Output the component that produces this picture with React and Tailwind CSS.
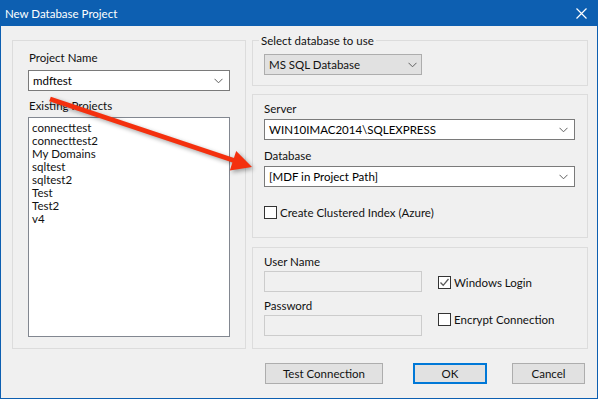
import { useState } from "react";

const font = { fontFamily: "Lato, 'Noto Sans', sans-serif" };

function Chevron() {
  return (
    <svg width="9" height="6" viewBox="0 0 9 6" className="shrink-0">
      <path d="M0.5 0.8 L4.5 4.8 L8.5 0.8" fill="none" stroke="#606060" strokeWidth="1" />
    </svg>
  );
}

function Combo({ value, className = "" }) {
  return (
    <div className={"flex items-center justify-between h-[21px] bg-white border border-[#7a7a7a] pl-[4px] pr-[6px] " + className}>
      <span className="text-black">{value}</span>
      <Chevron />
    </div>
  );
}

function CheckBox({ checked, label }) {
  return (
    <div className="flex items-center gap-[3px]">
      <div className="w-[13px] h-[13px] border border-[#333333] bg-white flex items-center justify-center">
        {checked && (
          <svg width="11" height="11" viewBox="0 0 11 11">
            <path d="M1.5 5.5 L4.2 8.3 L9.5 2" fill="none" stroke="#5a5a5a" strokeWidth="1.3" />
          </svg>
        )}
      </div>
      <span>{label}</span>
    </div>
  );
}

export default function App() {
  const [projects] = useState(["connecttest", "connecttest2", "My Domains", "sqltest", "sqltest2", "Test", "Test2", "v4"]);

  return (
    <div style={font} className="relative w-[598px] h-[399px] bg-[#0d5fb1] px-px pb-px flex flex-col text-[11.5px] leading-[15px] text-[#111111]">
      <div className="h-[26px] shrink-0 flex items-center justify-between pl-[4px] pr-[10px] text-white text-[11.5px]">
        <span>New Database Project</span>
        <svg width="11" height="11" viewBox="0 0 11 11">
          <path d="M0.5 0.5 L10.5 10.5 M10.5 0.5 L0.5 10.5" stroke="white" strokeWidth="1.2" />
        </svg>
      </div>

      <div className="flex-1 bg-[#f0f0f0] flex flex-col pl-[11px]">
        <div className="flex gap-[6px] pt-[14px]">
          <div className="w-[234px] h-[309px] border border-[#dcdcdc] px-[15px] pt-[9px] flex flex-col">
            <span className="pl-px">Project Name</span>
            <Combo value="mdftest" className="mt-[5px]" />
            <span className="mt-[7px] pl-px">Existing Projects</span>
            <div className="mt-[4px] h-[220px] bg-white border border-[#828790] pl-[3px] pt-[3px] flex flex-col">
              {projects.map((p) => (
                <span key={p} className="h-[13px] leading-[13px]">{p}</span>
              ))}
            </div>
          </div>

          <div className="w-[336px] flex flex-col">
            <div className="relative h-[46px] border border-[#dcdcdc] pl-[11px] pt-[13px]">
              <span className="absolute -top-[8px] left-[6px] bg-[#f0f0f0] px-[2px]">Select database to use</span>
              <div className="w-[158px] h-[21px] flex items-center justify-between bg-[#e1e1e1] border border-[#adadad] pl-[4px] pr-[4px]">
                <span>MS SQL Database</span>
                <Chevron />
              </div>
            </div>

            <div className="h-[144px] mt-[8px] border border-[#dcdcdc] pl-[11px] pr-[12px] pt-[6px] flex flex-col">
              <span>Server</span>
              <Combo value="WIN10IMAC2014\SQLEXPRESS" className="mt-[3px]" />
              <span className="mt-[8px]">Database</span>
              <Combo value="[MDF in Project Path]" className="mt-[3px]" />
              <div className="mt-[18px]">
                <CheckBox label="Create Clustered Index (Azure)" />
              </div>
            </div>

            <div className="h-[102px] mt-[9px] border border-[#dcdcdc] pl-[11px] pt-[6px] flex gap-[16px]">
              <div className="flex flex-col w-[158px]">
                <span>User Name</span>
                <div className="mt-[2px] h-[21px] border border-[#cccccc] bg-[#f0f0f0]" />
                <span className="mt-[6px]">Password</span>
                <div className="mt-[2px] h-[21px] border border-[#cccccc] bg-[#f0f0f0]" />
              </div>
              <div className="flex flex-col pt-[21px] gap-[22px]">
                <CheckBox checked label="Windows Login" />
                <CheckBox label="Encrypt Connection" />
              </div>
            </div>
          </div>
        </div>

        <div className="flex mt-[14px] pl-[253px]">
          <button className="w-[118px] h-[21px] bg-[#e1e1e1] border border-[#adadad]">Test Connection</button>
          <button className="ml-[30px] w-[74px] h-[21px] bg-[#e1e1e1] border-2 border-[#0078d7]">OK</button>
          <button className="ml-[25px] w-[73px] h-[21px] bg-[#e1e1e1] border border-[#adadad]">Cancel</button>
        </div>
      </div>

      <svg className="absolute left-0 top-0 pointer-events-none" width="598" height="399" style={{ filter: "drop-shadow(2px 2px 2px rgba(0,0,0,0.35))" }}>
        <line x1="50" y1="99" x2="234" y2="160.5" stroke="#f4300e" strokeWidth="5" />
        <polygon points="252,167 229.8,170.5 236.2,151" fill="#f4300e" />
      </svg>
    </div>
  );
}
